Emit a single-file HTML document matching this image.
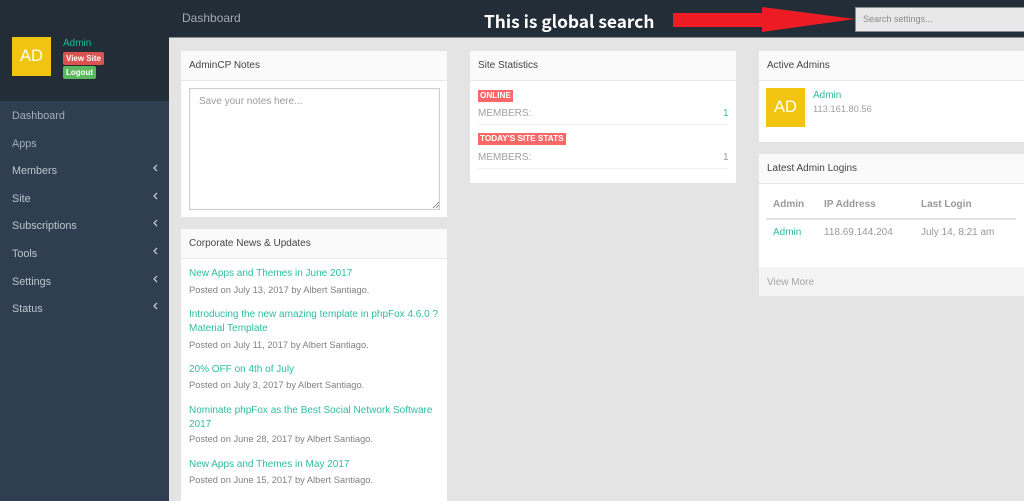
<!DOCTYPE html>
<html><head><meta charset="utf-8"><style>
html,body{margin:0;padding:0}
body{width:1024px;height:501px;overflow:hidden;position:relative;background:#e4e4e4;font-family:"Liberation Sans",sans-serif;font-size:11px;color:#888}
div,span{position:absolute;white-space:nowrap;box-sizing:border-box}
.panel{background:#fff}
.ph{left:0;right:0;top:0;height:30px;background:#fafafa;border-bottom:1px solid #e8e8e8;color:#444;font-size:10px;line-height:29px;padding-left:8px}
.nav{left:12px;font-size:10.8px;line-height:14px;color:#bcc5cf}
.t{line-height:14px}
.g{color:#2fbd9f;font-size:11px}
.p{color:#808080;font-size:9.3px}
.av{background:#f1c40f;color:#fff;text-align:center;width:39px;height:39px;line-height:38px;font-size:16.5px}
.red{background:#f96868;color:#fff;font-size:8.2px;font-weight:bold;line-height:12px;padding:0 2px;height:12px}
.hr{background:#f1f1f1;height:1px}
</style></head><body>
<div style="left:0;top:0;width:1024px;height:38px;background:#222d38;border-bottom:1px solid #8a8f94"></div>
<div style="left:0;top:0;width:169px;height:101px;background:#222d38"></div>
<div style="left:0;top:101px;width:169px;height:400px;background:#2f3f51"></div>

<div class="av" style="left:12px;top:37px">AD</div>
<span class="t" style="left:63px;top:37px;color:#1abc9c;font-size:10px">Admin</span>
<span style="left:63px;top:52px;width:41px;height:13px;background:#d9534f;border-radius:2px;color:#fff;font-size:8px;font-weight:bold;text-align:center;line-height:13px">View Site</span>
<span style="left:63px;top:66px;width:33px;height:13px;background:#5cb85c;border-radius:2px;color:#fff;font-size:8px;font-weight:bold;text-align:center;line-height:13px">Logout</span>

<span class="nav" style="top:109px;color:#a3adb8">Dashboard</span>
<span class="nav" style="top:137px;color:#a3adb8">Apps</span>
<span class="nav" style="top:164px">Members</span>
<span class="nav" style="top:192px">Site</span>
<span class="nav" style="top:219px">Subscriptions</span>
<span class="nav" style="top:247px">Tools</span>
<span class="nav" style="top:275px">Settings</span>
<span class="nav" style="top:302px">Status</span>
<svg style="position:absolute;left:0;top:0" width="169" height="320" fill="none" stroke="#bcc5cf" stroke-width="1.3"><path d="M157 165l-3 3 3 3M157 193l-3 3 3 3M157 220l-3 3 3 3M157 248l-3 3 3 3M157 276l-3 3 3 3M157 303l-3 3 3 3"/></svg>

<span style="left:182px;top:11px;color:#a4abb2;font-size:12px;line-height:15px">Dashboard</span>
<span style="left:484px;top:8px;color:#fff;font-family:'Noto Sans CJK JP',sans-serif;font-weight:bold;font-size:17.3px;line-height:26px">This is global search</span>
<svg style="position:absolute;left:670px;top:4px" width="190" height="32"><path d="M3 9H92V3L185 15 92 28V23H3Z" fill="#ed1c24"/></svg>
<div style="left:855px;top:7px;width:169px;height:25px;background:#e8e8e8;border:1px solid #8a8f94;border-right:0;color:#8a8a8a;font-size:9px;line-height:22px;padding-left:7px">Search settings...</div>

<div class="panel" style="left:181px;top:51px;width:266px;height:166px">
 <div class="ph">AdminCP Notes</div>
 <div style="left:8px;top:37px;width:251px;height:122px;border:1px solid #cfcfcf;box-shadow:inset 0 0 1px #ccc;color:#9a9a9a;font-size:10px;line-height:14px;padding:6px 9px">Save your notes here...</div>
 <svg style="position:absolute;left:251px;top:150px" width="8" height="8" stroke="#777" stroke-width=".8"><path d="M1 7L7 1M4 7L7 4"/></svg>
</div>

<div class="panel" style="left:181px;top:229px;width:266px;height:272px">
 <div class="ph" style="line-height:30px">Corporate News &amp; Updates</div>
 <span class="t g" style="left:8px;top:38px;font-size:10px">New Apps and Themes in June 2017</span>
 <span class="t p" style="left:8px;top:54px">Posted on July 13, 2017 by Albert Santiago.</span>
 <span class="t g" style="left:8px;top:79px;font-size:10px">Introducing the new amazing template in phpFox 4.6.0 ?</span>
 <span class="t g" style="left:8px;top:93px;font-size:10px">Material Template</span>
 <span class="t p" style="left:8px;top:109px">Posted on July 11, 2017 by Albert Santiago.</span>
 <span class="t g" style="left:8px;top:134px;font-size:10px">20% OFF on 4th of July</span>
 <span class="t p" style="left:8px;top:149px">Posted on July 3, 2017 by Albert Santiago.</span>
 <span class="t g" style="left:8px;top:175px;font-size:10px">Nominate phpFox as the Best Social Network Software</span>
 <span class="t g" style="left:8px;top:189px;font-size:10px">2017</span>
 <span class="t p" style="left:8px;top:203px">Posted on June 28, 2017 by Albert Santiago.</span>
 <span class="t g" style="left:8px;top:229px;font-size:10px">New Apps and Themes in May 2017</span>
 <span class="t p" style="left:8px;top:244px">Posted on June 15, 2017 by Albert Santiago.</span>
</div>

<div class="panel" style="left:470px;top:51px;width:266px;height:132px">
 <div class="ph">Site Statistics</div>
 <span class="red" style="left:8px;top:39px">ONLINE</span>
 <span class="t" style="left:8px;top:56px;color:#a0a0a0;font-size:10px">MEMBERS:</span>
 <span class="t" style="left:253px;top:56px;color:#2fbd9f;font-size:10px">1</span>
 <div class="hr" style="left:8px;top:73px;width:250px"></div>
 <span class="red" style="left:8px;top:82px">TODAY'S SITE STATS</span>
 <span class="t" style="left:8px;top:100px;color:#a0a0a0;font-size:10px">MEMBERS:</span>
 <span class="t" style="left:253px;top:100px;color:#999;font-size:10px">1</span>
 <div class="hr" style="left:8px;top:117px;width:250px"></div>
</div>

<div class="panel" style="left:759px;top:51px;width:265px;height:91px">
 <div class="ph">Active Admins</div>
 <div class="av" style="left:7px;top:37px">AD</div>
 <span class="t g" style="left:54px;top:38px;font-size:10px">Admin</span>
 <span class="t" style="left:54px;top:51px;color:#a0a0a0;font-size:9.3px">113.161.80.56</span>
</div>

<div class="panel" style="left:759px;top:154px;width:265px;height:142px">
 <div class="ph">Latest Admin Logins</div>
 <span class="t" style="left:14px;top:44px;font-weight:bold;color:#999;font-size:10px">Admin</span>
 <span class="t" style="left:65px;top:44px;font-weight:bold;color:#999;font-size:10px">IP Address</span>
 <span class="t" style="left:162px;top:44px;font-weight:bold;color:#999;font-size:10px">Last Login</span>
 <div style="left:7px;top:64px;width:250px;height:2px;background:#e2e2e2"></div>
 <span class="t g" style="left:14px;top:72px;font-size:10px">Admin</span>
 <span class="t" style="left:65px;top:72px;color:#999;font-size:10px">118.69.144.204</span>
 <span class="t" style="left:162px;top:72px;color:#999;font-size:10px">July 14, 8:21 am</span>
 <div style="left:0;top:113px;width:265px;height:29px;background:#f4f4f4;color:#a6a6a6;font-size:10px;line-height:31px;padding-left:8px">View More</div>
</div>
</body></html>
